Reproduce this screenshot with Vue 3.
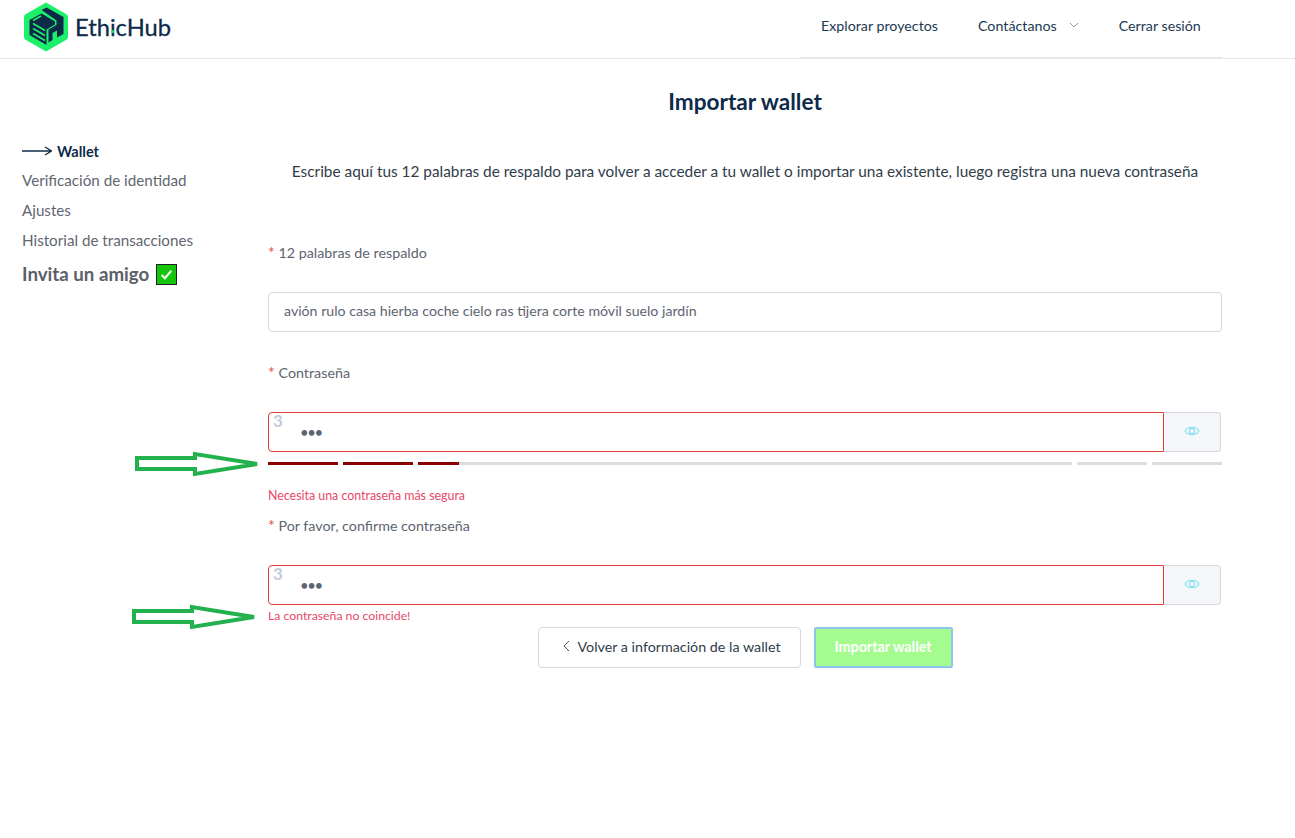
<script setup>
const menu = ['Verificación de identidad', 'Ajustes', 'Historial de transacciones']
</script>

<template>
  <div class="page">
    <header class="topbar">
      <div class="brand">
        <svg class="logo" viewBox="0 0 44 50" width="44" height="50">
          <path d="M22 .5 L42 12 Q44 13.200 44 15 V35 Q44 36.800 42 38 L22 49.500 L2 38 Q0 36.800 0 35 V15 Q0 13.200 2 12 Z" fill="#1cf06a" />
          <path d="M17.500 8 L22.500 5.500 L39.500 15 V32 L33 35.500 V28.500 L28.500 31 V38 L24.500 40.500 V27.500 L32.500 23 V18.500 Z" fill="#0d2b49" />
          <path d="M5.500 18 L17.500 11.500 L31 19.500 V22.500 L22.500 27.500 V43 L5.500 33 Z" fill="#0d2b49" />
          <path d="M9 21.500 L21 28.500 M9 26.500 L21 33.500 M9 31.500 L21 38.500 M17 14 L9 18.500" stroke="#1cf06a" stroke-width="1.500" fill="none" />
        </svg>
        <span class="wordmark">Eth<span class="dot-i">i</span>cHub</span>
      </div>
      <nav class="nav">
        <a class="nav-item">Explorar proyectos</a>
        <a class="nav-item">Contáctanos
          <svg class="chev" viewBox="0 0 10 6" width="10" height="6"><path d="M1 1 L5 5 L9 1" fill="none" stroke="#8a96a3" stroke-width="1" /></svg>
        </a>
        <a class="nav-item">Cerrar sesión</a>
      </nav>
    </header>

    <h1 class="title">Importar wallet</h1>

    <div class="body">
      <aside class="side">
        <div class="side-item active">
          <svg viewBox="0 0 30 10" width="30" height="10"><path d="M0 5 H29 M23 1 L29.500 5 L23 9" fill="none" stroke="#0d2b49" stroke-width="1.300" /></svg>
          Wallet
        </div>
        <div v-for="m in menu" :key="m" class="side-item">{{ m }}</div>
        <div class="invite">
          Invita un amigo
          <span class="check">
            <svg viewBox="0 0 14 14" width="15" height="15"><path d="M2.500 7.500 L5.500 10.500 L11.500 3.500" fill="none" stroke="#fff" stroke-width="1.800" /></svg>
          </span>
        </div>
      </aside>

      <main class="content">
        <p class="lead">Escribe aquí tus 12 palabras de respaldo para volver a acceder a tu wallet o importar una existente, luego registra una nueva contraseña</p>

        <label class="label first"><span class="req">*</span> 12 palabras de respaldo</label>
        <div class="plain-input">avión rulo casa hierba coche cielo ras tijera corte móvil suelo jardín</div>

        <label class="label second"><span class="req">*</span> Contraseña</label>
        <div class="pw">
          <div class="pw-field"><span class="ghost">3</span><span class="dots">•••</span></div>
          <div class="pw-eye">
            <svg viewBox="0 0 16 12" width="16" height="12"><path d="M1 6 C4 1 12 1 15 6 C12 11 4 11 1 6 Z" fill="none" stroke="#86dfee" stroke-width="1.100" /><circle cx="8" cy="6" r="2.600" fill="none" stroke="#86dfee" stroke-width="1.100" /></svg>
          </div>
        </div>
        <div class="meter">
          <span class="seg on"></span>
          <span class="seg on"></span>
          <span class="seg wide"><i class="seg-fill"></i></span>
          <span class="seg"></span>
          <span class="seg"></span>
        </div>
        <div class="err strength">Necesita una contraseña más segura</div>

        <label class="label third"><span class="req">*</span> Por favor, confirme contraseña</label>
        <div class="pw">
          <div class="pw-field"><span class="ghost">3</span><span class="dots">•••</span></div>
          <div class="pw-eye">
            <svg viewBox="0 0 16 12" width="16" height="12"><path d="M1 6 C4 1 12 1 15 6 C12 11 4 11 1 6 Z" fill="none" stroke="#86dfee" stroke-width="1.100" /><circle cx="8" cy="6" r="2.600" fill="none" stroke="#86dfee" stroke-width="1.100" /></svg>
          </div>
        </div>
        <div class="err mismatch">La contraseña no coincide!</div>

        <div class="actions">
          <button class="btn back">
            <svg viewBox="0 0 7 12" width="7" height="12"><path d="M6 1 L1 6 L6 11" fill="none" stroke="#44525f" stroke-width="1" /></svg>
            Volver a información de la wallet
          </button>
          <button class="btn submit">Importar wallet</button>
        </div>
      </main>
    </div>

    <svg class="anno anno-1" viewBox="0 0 128 26" width="128" height="26"><path d="M3 7 H61 V3 L123 13 L61 23 V18 H3 Z" fill="#fff" stroke="#22b14c" stroke-width="4" /></svg>
    <svg class="anno anno-2" viewBox="0 0 128 26" width="128" height="26"><path d="M3 7 H61 V3 L123 13 L61 23 V18 H3 Z" fill="#fff" stroke="#22b14c" stroke-width="4" /></svg>
  </div>
</template>

<style>
html, body { margin: 0; background: #fff; }
</style>

<style scoped>
.page {
  position: relative;
  height: 838px;
  overflow: hidden;
  font-family: Lato, "Noto Sans", sans-serif;
  font-size: 14.300px;
  color: #5d6470;
}
.topbar {
  display: flex;
  justify-content: space-between;
  height: 58px;
  border-bottom: 1px solid #e6e6e6;
  padding: 0 73px 0 24px;
}
.brand { display: flex; align-items: flex-start; gap: 7px; padding-top: 2px; }
.wordmark {
  font-size: 23.700px;
  color: #0d2b49;
  line-height: 50px;
  -webkit-text-stroke: 0.300px #0d2b49;
}
.dot-i { position: relative; }
.dot-i::after {
  content: "";
  position: absolute;
  left: 1.500px;
  top: 17px;
  width: 3px;
  height: 3px;
  border-radius: 50%;
  background: #1cf06a;
}
.nav {
  display: flex;
  width: 421px;
  box-sizing: border-box;
  height: 59px;
  padding-left: 20px;
  padding-bottom: 7px;
  gap: 40px;
  border-bottom: 2px solid #e6e6e6;
  align-items: center;
  font-size: 14.250px;
}
.nav-item { color: #1d3a52; white-space: nowrap; display: flex; align-items: center; gap: 12px; }
.title {
  margin: 30px 73px 0 268px;
  text-align: center;
  font-size: 22.600px;
  line-height: 26px;
  font-weight: 700;
  color: #0d2b49;
}
.body { display: flex; padding: 0 73px 0 22px; }
.side { width: 246px; flex: none; padding-top: 21px; }
.side-item {
  height: 30px;
  box-sizing: border-box;
  padding-bottom: 1px;
  line-height: 29px;
  font-size: 15.200px;
  color: #5f6670;
  display: flex;
  align-items: center;
  gap: 5px;
}
.side-item.active { color: #0d2b49; font-weight: 700; font-size: 14.500px; padding-bottom: 0; }
.invite {
  display: flex;
  align-items: center;
  gap: 7px;
  height: 36px;
  font-size: 18.700px;
  font-weight: 700;
  color: #5a6069;
}
.check {
  display: flex;
  align-items: center;
  justify-content: center;
  width: 21px;
  height: 21px;
  box-sizing: border-box;
  background: #16c60c;
  border: 1px solid #222;
}
.content { flex: 1; min-width: 0; }
.lead {
  margin: 0;
  padding-top: 46px;
  text-align: center;
  font-size: 15.360px;
  line-height: 20px;
  color: #2f3d4a;
  white-space: nowrap;
}
.label { display: block; line-height: 18px; color: #5d6470; }
.req { color: #e5484d; font-size: 16px; line-height: 16px; }
.label.first { margin-top: 63px; }
.label.second { margin-top: 32px; }
.label.third { margin-top: 14px; }
.plain-input {
  margin-top: 30px;
  height: 40px;
  box-sizing: border-box;
  border: 1px solid #d5d8dc;
  border-radius: 4px;
  padding: 0 15px;
  font-size: 14.170px;
  line-height: 36px;
}
.pw { display: flex; height: 40px; margin-top: 30px; margin-right: 1px; }
.pw-field {
  position: relative;
  flex: 1;
  box-sizing: border-box;
  border: 1px solid #e23c3c;
  border-radius: 4px 0 0 4px;
  padding-left: 31px;
  line-height: 38px;
}
.ghost {
  position: absolute;
  left: 4px;
  top: 0;
  font-size: 17px;
  font-weight: 700;
  line-height: 16px;
  color: #c5ccd8;
}
.dots { font-size: 15px; color: #5d6470; letter-spacing: -1.500px; }
.pw-eye {
  width: 57px;
  flex: none;
  box-sizing: border-box;
  display: flex;
  align-items: center;
  justify-content: center;
  padding-bottom: 2px;
  background: #f4f6fa;
  border: 1px solid #d5d8dc;
  border-left: 0;
  border-radius: 0 4px 4px 0;
}
.meter { display: flex; gap: 5px; margin-top: 10px; height: 3px; }
.seg { width: 70px; flex: none; background: #dcdcdc; }
.seg.on { background: #8b0000; }
.seg.wide { flex: 1; position: relative; }
.seg-fill { position: absolute; left: 0; top: 0; bottom: 0; width: 41px; background: #8b0000; }
.err { font-size: 12.400px; line-height: 14px; color: #e8476a; }
.err.strength { margin-top: 24px; }
.err.mismatch { margin-top: 4px; font-size: 12.250px; }
.actions {
  display: flex;
  justify-content: center;
  gap: 13px;
  margin-top: 4px;
}
.btn {
  height: 41px;
  font-family: inherit;
  font-size: 14.300px;
  border-radius: 4px;
  cursor: pointer;
  padding-bottom: 4px;
}
.btn.back {
  width: 263px;
  background: #fff;
  border: 1px solid #d5d8dc;
  color: #2f3d4a;
  display: flex;
  align-items: center;
  justify-content: center;
  gap: 7px;
  padding-left: 12px;
}
.btn.submit {
  width: 139px;
  background: #a4fc8f;
  border: 2px solid #8cc4ec;
  border-radius: 2px;
  color: #fff;
  font-weight: 700;
}
.anno { position: absolute; }
.anno-1 { left: 134px; top: 451px; }
.anno-2 { left: 131px; top: 604px; }
</style>
